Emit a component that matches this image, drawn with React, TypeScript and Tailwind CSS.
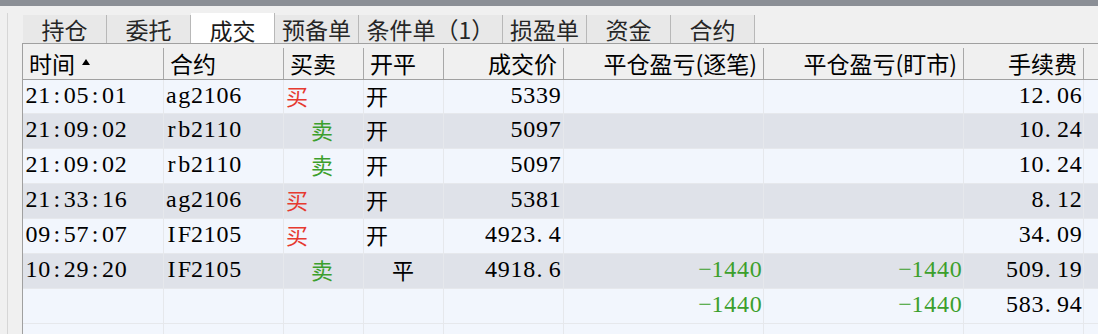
import React from "react";

type Row = {
  t: string;
  c: string;
  bs: string;
  oc: string;
  p: string;
  a: string;
  b: string;
  f: string;
};

const rows: Row[] = [
  { t: "21:05:01", c: "ag2106", bs: "买", oc: "开", p: "5339", a: "", b: "", f: "12.06" },
  { t: "21:09:02", c: "rb2110", bs: "卖", oc: "开", p: "5097", a: "", b: "", f: "10.24" },
  { t: "21:09:02", c: "rb2110", bs: "卖", oc: "开", p: "5097", a: "", b: "", f: "10.24" },
  { t: "21:33:16", c: "ag2106", bs: "买", oc: "开", p: "5381", a: "", b: "", f: "8.12" },
  { t: "09:57:07", c: "IF2105", bs: "买", oc: "开", p: "4923.4", a: "", b: "", f: "34.09" },
  { t: "10:29:20", c: "IF2105", bs: "卖", oc: "平", p: "4918.6", a: "−1440", b: "−1440", f: "509.19" },
  { t: "", c: "", bs: "", oc: "", p: "", a: "−1440", b: "−1440", f: "583.94" },
  { t: "", c: "", bs: "", oc: "", p: "", a: "", b: "", f: "" },
];

const tabs = [
  { label: "持仓", w: "w-[84px]" },
  { label: "委托", w: "w-[84px]" },
  { label: "成交", w: "w-[84px]", active: true },
  { label: "预备单", w: "w-[84px]" },
  { label: "条件单（1）", w: "w-[144px]" },
  { label: "损盈单", w: "w-[84px]" },
  { label: "资金", w: "w-[84px]" },
  { label: "合约", w: "w-[84px]" },
];

function M({ t }: { t: string }) {
  return (
    <span className="inline-flex font-['Liberation_Serif',serif] text-[24px] leading-[28px]">
      {[...t].map((ch, i) => (
        <span
          key={i}
          className={
            ch === "."
              ? "inline-block w-[12.75px] text-left pl-[1px]"
              : "inline-block w-[12.75px] text-center"
          }
        >
          {ch}
        </span>
      ))}
    </span>
  );
}

const headers: { label: string; right?: boolean; sort?: boolean }[] = [
  { label: "时间", sort: true },
  { label: "合约" },
  { label: "买卖" },
  { label: "开平" },
  { label: "成交价", right: true },
  { label: "平仓盈亏(逐笔)", right: true },
  { label: "平仓盈亏(盯市)", right: true },
  { label: "手续费", right: true },
];

const gridCols =
  "grid grid-cols-[141px_120px_80px_80px_120px_200px_200px_120px_1fr]";

const cellBase = "border-r border-[#e6e8ec] flex items-start";
const numCell = `${cellBase} pt-px`;
const cjk = "font-['Noto_Sans_CJK_SC','Noto_Sans',sans-serif]";

export default function App() {
  return (
    <div className="w-[1098px] h-[334px] overflow-hidden bg-[#f0f0f0] flex flex-col text-black">
      <div className="h-[6px] bg-[#8b8f96] shrink-0" />
      <div className="flex flex-1 min-h-0">
        {/* left gutter */}
        <div className="w-[22px] shrink-0 pl-[7px] pt-[7px] flex">
          <div className="w-px bg-[#d6d6d6] self-stretch" />
        </div>
        {/* main */}
        <div className="flex-1 flex flex-col min-w-0">
          {/* tabs */}
          <div className={`h-[37px] shrink-0 flex items-end pl-px ${cjk}`}>
            {tabs.map((tb) =>
              tb.active ? (
                <div
                  key={tb.label}
                  className={`${tb.w} h-[30px] bg-white border-r border-[#b8b8b8] flex justify-center items-start pt-[2px] text-[23px] leading-[30px] text-[#1a1a1a]`}
                >
                  {tb.label}
                </div>
              ) : (
                <div
                  key={tb.label}
                  className={`${tb.w} h-[28px] bg-[#e8e8e8] border-r border-[#b8b8b8] flex justify-center items-start text-[23px] leading-[28px] text-[#262626]`}
                >
                  {tb.label}
                </div>
              )
            )}
          </div>
          {/* table */}
          <div className="flex-1 border-l border-t border-[#a0a0a0] flex flex-col min-h-0">
            {/* header */}
            <div className={`${gridCols} h-[36px] shrink-0 bg-[#f0f0f0] border-b border-[#a0a0a0] ${cjk}`}>
              {headers.map((h) => (
                <div key={h.label} className="flex">
                  <div
                    className={`flex-1 flex items-center pt-[3px] text-[23px] leading-[30px] ${
                      h.right ? "justify-end pr-[6px]" : "pl-[6px]"
                    }`}
                  >
                    <span>{h.label}</span>
                    {h.sort && (
                      <svg width="8" height="6" viewBox="0 0 8 6" className="ml-[7px] mb-[3px]">
                        <polygon points="4,0 8,6 0,6" fill="#000" />
                      </svg>
                    )}
                  </div>
                  <div className="w-px bg-[#a8a8a8] mt-[4px]" />
                </div>
              ))}
              <div />
            </div>
            {/* rows */}
            {rows.map((r, i) => (
              <div
                key={i}
                className={`${gridCols} shrink-0 border-b border-[#e6e8ec] ${
                  i === 0 ? "h-[34px]" : "h-[35px]"
                } ${i % 2 === 1 && i < 7 ? "bg-[#dfe2e9]" : "bg-[#f2f6fd]"}`}
              >
                <div className={`${numCell} pl-[2px]`}>
                  <M t={r.t} />
                </div>
                <div className={`${numCell} pl-[1px]`}>
                  <M t={r.c} />
                </div>
                <div
                  className={`${cellBase} ${cjk} text-[22px] leading-[30px] ${
                    r.bs === "卖" ? "pl-[27px] text-[#3c9f2c]" : "pl-[2px] text-[#e63a30]"
                  }`}
                >
                  {r.bs}
                </div>
                <div
                  className={`${cellBase} ${cjk} text-[22px] leading-[30px] ${
                    r.oc === "平" ? "pl-[28px]" : "pl-[2px]"
                  }`}
                >
                  {r.oc}
                </div>
                <div className={`${numCell} justify-end pr-[2px]`}>
                  <M t={r.p} />
                </div>
                <div className={`${numCell} justify-end pr-[1px] text-[#3c9f2c]`}>
                  <M t={r.a} />
                </div>
                <div className={`${numCell} justify-end pr-[1px] text-[#3c9f2c]`}>
                  <M t={r.b} />
                </div>
                <div className={`${numCell} justify-end pr-[1px]`}>
                  <M t={r.f} />
                </div>
                <div />
              </div>
            ))}
          </div>
        </div>
      </div>
    </div>
  );
}
